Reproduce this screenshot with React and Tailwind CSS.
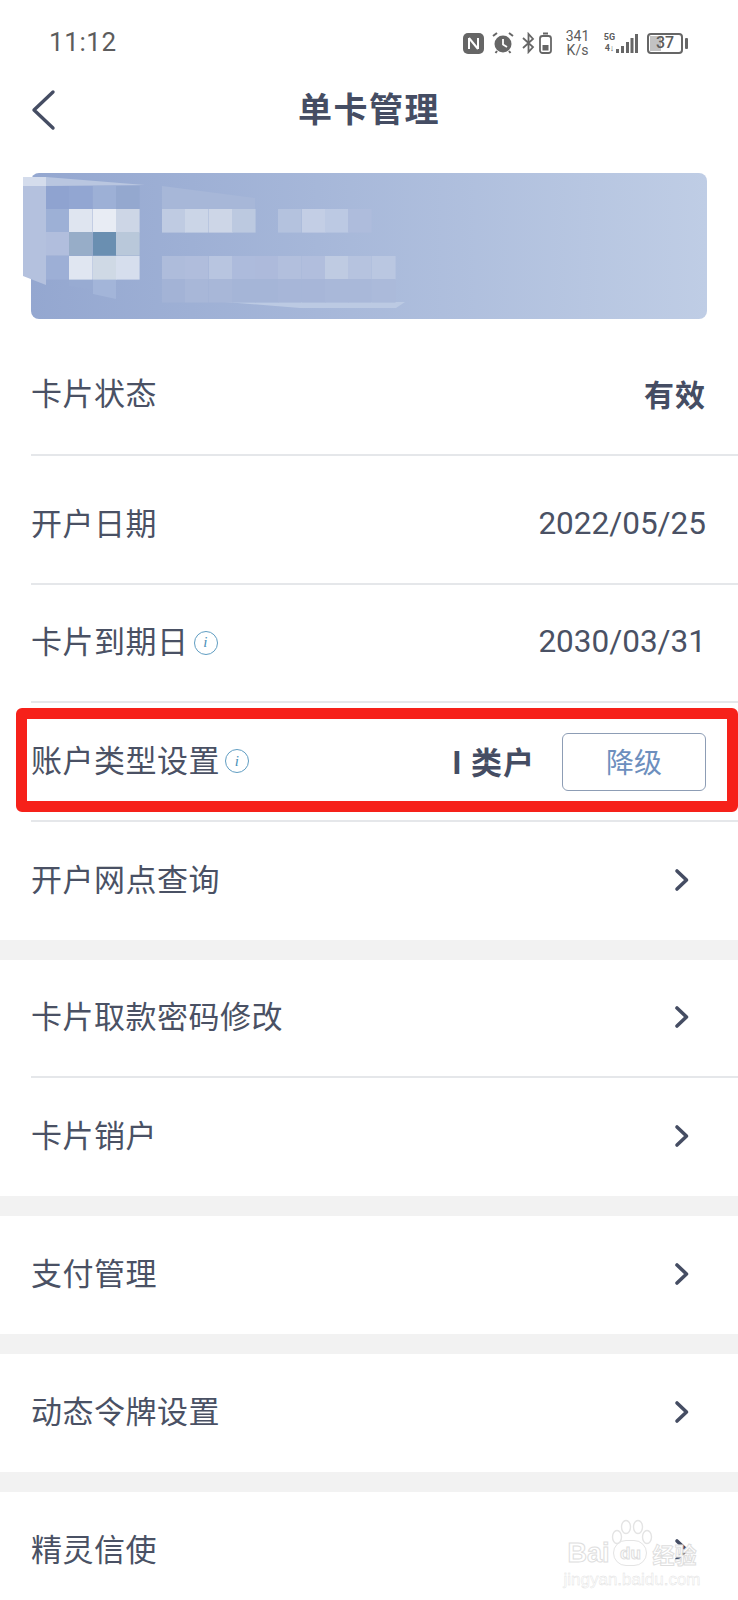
const FONT = "font-['Noto_Sans_CJK_SC','Noto_Sans',sans-serif]";

// card mosaic: [x, y, color]
const CELLS = [
  [46, 186, "#8fa3d0"], [69, 186, "#92a6d2"], [93, 186, "#9db0d6"], [116, 186, "#94a8cf"],
  [46, 209, "#9db0d6"], [69, 209, "#dfe5f0"], [93, 209, "#e8ecf4"], [116, 209, "#cdd6e6"],
  [46, 232, "#b1bedd"], [69, 232, "#97adc8"], [93, 232, "#6a8fb1"], [116, 232, "#b9c8da"],
  [46, 256, "#9dafd6"], [69, 256, "#e0e6f1"], [93, 256, "#cfd9e5"], [116, 256, "#d6deed"],
  [162, 209, "#bfcbe2"], [185, 209, "#cbd5e7"], [209, 209, "#cdd6e7"],
  [232, 209, "#bcc9e0"], [278, 209, "#b4c2de"], [302, 209, "#c3cee5"], [325, 209, "#bcc9e3"],
  [348, 209, "#aebcdc"], [162, 256, "#aebcdb"], [185, 256, "#b0bddc"], [209, 256, "#b8c5e0"],
  [232, 256, "#adbbdc"], [255, 256, "#adbadb"], [278, 256, "#b2bfdd"], [302, 256, "#b1bedd"],
  [325, 256, "#bfcbe2"], [348, 256, "#b6c3df"], [372, 256, "#bac7e1"],
  [162, 279, "#a3b3d6"], [185, 279, "#a8b7d8"], [209, 279, "#a8b7d8"], [232, 279, "#a5b5d7"],
  [255, 279, "#a5b5d7"], [278, 279, "#a7b6d8"], [302, 279, "#a7b6d8"], [325, 279, "#a9b8d9"],
  [348, 279, "#a9b8d9"], [372, 279, "#abbada"],
];

function CardMosaic() {
  return (
    <svg className="absolute left-[-31px] top-0" width="440" height="146" viewBox="0 173 440 146">
      <polygon points="93,279 116,279 116,299 93,294" fill="#a3b5d9" />
      <polygon points="69,279 93,279 93,290 69,286" fill="#98abd2" />
      <polygon points="162,186 255,198 255,209 162,209" fill="#a7b7d8" />
      <polygon points="225,302 405,302 396,308 300,308" fill="#bccae3" />
      {CELLS.map(([x, y, fill]) => (
        <rect key={`${x}-${y}`} x={x} y={y} width="23.6" height="23.6" fill={fill} />
      ))}
      <polygon points="23,177 46,177 46,285 23,276" fill="#b4c1de" />
      <polygon points="23,177 46,177 46,186 23,186" fill="#d4dcec" />
      <polygon points="46,177 145,185 46,186" fill="#b9c6e0" />
    </svg>
  );
}

function InfoIcon() {
  return (
    <span className="ml-[5px] mt-[6px] flex h-[24px] w-[24px] items-center justify-center rounded-full border-[1.5px] border-[#5f9dc2] font-['Liberation_Serif',serif] text-[15px] italic leading-none text-[#4a90b8]">
      i
    </span>
  );
}

function Chevron() {
  return (
    <svg className="mr-[16px]" width="16" height="24" viewBox="0 0 16 24" fill="none">
      <path d="M3 3 L12.5 12 L3 21" stroke="#454d63" strokeWidth="3.6" strokeLinecap="round" strokeLinejoin="round" />
    </svg>
  );
}

function Row({ label, info, right, border = true, className = "" }) {
  return (
    <div className={`ml-[31px] flex items-center justify-between pb-[2px] pr-[32px] ${border ? "border-b-2 border-[#e5e7ea]" : ""} ${className}`}>
      <div className="mb-[5px] flex items-center text-[31px] leading-none tracking-[0.5px] text-[#4a5164]">
        {label}
        {info && <InfoIcon />}
      </div>
      {right ?? <Chevron />}
    </div>
  );
}

function StatusBar() {
  return (
    <div className="flex h-[72px] items-start justify-between pl-[49px] pr-[50px] pt-[29px] text-[#5c5c5c]">
      <span className="font-['Roboto',sans-serif] text-[26px] leading-[26px] tracking-[0.6px]">11:12</span>
      <div className="flex items-center">
        <svg width="21" height="21" viewBox="0 0 21 21">
          <rect width="21" height="21" rx="5" fill="#666" />
          <path d="M6 5 V16 M6 5 L15 16 M15 5 V16" stroke="#fff" strokeWidth="2" fill="none" />
        </svg>
        <svg className="ml-[8px]" width="22" height="22" viewBox="0 0 22 22">
          <circle cx="11" cy="12" r="8.5" fill="#666" />
          <path d="M11 7 V12.5 L15 15" stroke="#fff" strokeWidth="1.8" fill="none" />
          <path d="M1 4 L5 1 M21 4 L17 1 M5 19 L3.5 21 M17 19 L18.5 21" stroke="#666" strokeWidth="2" />
        </svg>
        <svg className="ml-[8px]" width="13" height="22" viewBox="0 0 13 22" fill="none">
          <path d="M1 6 L11 15 L6.5 20 V2 L11 7 L1 16" stroke="#666" strokeWidth="1.8" />
        </svg>
        <svg className="ml-[4px]" width="13" height="22" viewBox="0 0 13 22" fill="none">
          <rect x="1" y="4" width="11" height="17" rx="2.5" stroke="#666" strokeWidth="1.8" />
          <rect x="4" y="0.5" width="5" height="2" fill="#666" />
          <rect x="3.5" y="13" width="6" height="5.5" fill="#666" />
        </svg>
        <div className="ml-[13px] flex w-[25px] flex-col items-center font-['Roboto',sans-serif] text-[14px] leading-[14px]">
          <span>341</span>
          <span>K/s</span>
        </div>
        <div className="ml-[14px] flex w-[11px] flex-col items-center font-['Roboto',sans-serif] text-[9px] font-bold leading-[11px]">
          <span>5G</span>
          <span>4↓</span>
        </div>
        <svg className="ml-[1px]" width="22" height="21" viewBox="0 0 22 21" fill="#666">
          <rect x="0" y="16" width="3" height="4" />
          <rect x="5" y="13" width="3" height="7" />
          <rect x="10" y="9" width="3" height="11" />
          <rect x="14.5" y="5" width="3" height="15" />
          <rect x="19" y="1" width="3" height="19" />
        </svg>
        <div className="relative ml-[9px] flex h-[21px] w-[36px] items-center justify-center rounded-[4px] border-2 border-[#666] font-['Roboto',sans-serif] text-[16px] font-medium leading-none">
          <div className="absolute bottom-[1px] left-[1px] top-[1px] w-[11px] bg-[#c2c2c2]" />
          <span className="relative">37</span>
        </div>
        <div className="ml-[2px] h-[11px] w-[3px] rounded-[1px] bg-[#666]" />
      </div>
    </div>
  );
}

function Watermark() {
  return (
    <div className="absolute left-[567px] top-[1519px] flex w-[130px] flex-col items-center text-white [-webkit-text-stroke:1px_#dedede]">
      <svg width="42" height="28" viewBox="0 0 42 28" fill="none" stroke="#e4e4e4" strokeWidth="1.4">
        <ellipse cx="6" cy="18" rx="4.5" ry="6.5" />
        <ellipse cx="15" cy="8" rx="4.5" ry="6.5" />
        <ellipse cx="27" cy="8" rx="4.5" ry="6.5" />
        <ellipse cx="36" cy="18" rx="4.5" ry="6.5" />
      </svg>
      <div className="mt-[-8px] flex items-center whitespace-nowrap font-['Liberation_Sans',sans-serif] text-[27px] font-bold leading-[28px]">
        <span className="w-[42px]">Bai</span>
        <span className="ml-[4px] flex h-[26px] w-[34px] items-center justify-center rounded-full border border-[#e4e4e4] text-[17px] leading-none">du</span>
        <span className={`ml-[5px] text-[22px] leading-none ${FONT}`}>经验</span>
      </div>
      <div className="mt-[4px] whitespace-nowrap font-['Liberation_Sans',sans-serif] text-[17px] leading-[17px] [-webkit-text-stroke:0.4px_#dedede]">jingyan.baidu.com</div>
    </div>
  );
}

export default function App() {
  return (
    <div className={`relative h-[1600px] w-[738px] overflow-hidden bg-white ${FONT}`}>
      <StatusBar />

      <div className="relative flex h-[76px] items-center justify-center">
        <svg className="absolute left-[30px] top-[17px]" width="26" height="42" viewBox="0 0 26 42" fill="none">
          <path d="M23 3 L4 21 L23 39" stroke="#454d63" strokeWidth="3.4" strokeLinecap="round" strokeLinejoin="round" />
        </svg>
        <span className="mb-[4px] text-[34px] font-bold leading-none tracking-[1.5px] text-[#454d63]">单卡管理</span>
      </div>

      <div className="relative mx-[31px] mt-[25px] h-[146px] rounded-[8px] bg-gradient-to-r from-[#94a7d0] to-[#bfcde5]">
        <CardMosaic />
      </div>

      <Row
        label="卡片状态"
        className="h-[137px] pt-[16px]"
        right={<span className="mb-[2px] text-[30px] font-bold leading-none tracking-[1px] text-[#454d63]">有效</span>}
      />
      <Row
        label="开户日期"
        className="h-[129px] pt-[10px]"
        right={<span className="font-['Roboto',sans-serif] text-[31.5px] leading-none text-[#4a5164]">2022/05/25</span>}
      />
      <Row
        label="卡片到期日"
        info
        className="h-[118px]"
        right={<span className="font-['Roboto',sans-serif] text-[31.5px] leading-none text-[#4a5164]">2030/03/31</span>}
      />
      <Row
        label="账户类型设置"
        info
        className="h-[119px]"
        right={
          <div className="flex items-center">
            <span className="mb-[1px] text-[31px] font-bold leading-none tracking-[1px] text-[#454d63]">I 类户</span>
            <span className="ml-[27px] mt-[2px] flex h-[58px] w-[144px] items-center justify-center rounded-[6px] border border-[#8d9db5] pb-[1px] text-[28px] leading-none text-[#6d8fbe]">
              降级
            </span>
          </div>
        }
      />
      <Row label="开户网点查询" border={false} className="h-[118px]" />

      <div className="h-[20px] bg-[#f2f2f2]" />
      <Row label="卡片取款密码修改" className="h-[118px]" />
      <Row label="卡片销户" border={false} className="h-[118px]" />

      <div className="h-[20px] bg-[#f2f2f2]" />
      <Row label="支付管理" border={false} className="h-[118px]" />

      <div className="h-[20px] bg-[#f2f2f2]" />
      <Row label="动态令牌设置" border={false} className="h-[118px]" />

      <div className="h-[20px] bg-[#f2f2f2]" />
      <Row label="精灵信使" border={false} className="h-[118px]" />

      {/* red annotation box */}
      <div className="absolute left-[16px] top-[708px] h-[104px] w-[722px] rounded-[6px] border-[11px] border-[#f6211a]" />
      <Watermark />
    </div>
  );
}
